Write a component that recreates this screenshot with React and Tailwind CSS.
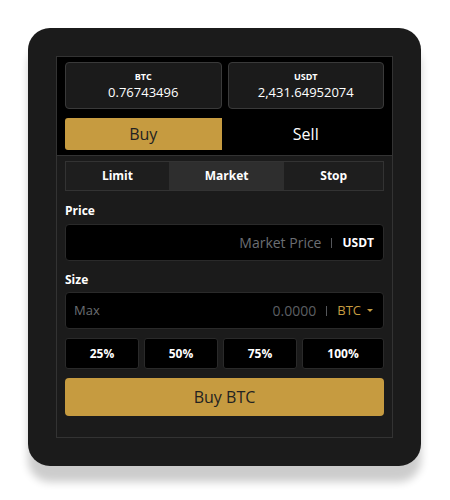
import React, { useState } from 'react';

const balances = [
  { coin: 'BTC', amount: '0.76743496' },
  { coin: 'USDT', amount: '2,431.64952074' },
];

const App = () => {
  const [side, setSide] = useState('buy');
  const [orderType, setOrderType] = useState('Market');

  return (
    <div className="min-h-screen bg-white pt-[28px] pl-[28px]" style={{ fontFamily: '"Open Sans", "Noto Sans", sans-serif' }}>
      <div className="w-[393px] rounded-[22px] bg-[#1b1b1b] p-[28px] shadow-[0_16px_8px_rgba(0,0,0,0.2)]">
        <div className="border border-[#333333]">
          {/* Balances + side toggle */}
          <div className="bg-black px-2 pt-[5px] pb-[5px] border-b border-[#333333]">
            <div className="grid grid-cols-2 gap-[6px]">
              {balances.map((b) => (
                <div key={b.coin} className="h-[47px] rounded-[4px] border border-[#3a3a3a] bg-[#1b1b1b] flex flex-col items-center justify-center">
                  <span className="text-[9px] font-bold leading-[12px] text-white">{b.coin}</span>
                  <span className="text-[13px] leading-[18px] text-white">{b.amount}</span>
                </div>
              ))}
            </div>
            <div className="mt-[9px] grid grid-cols-2 gap-[6px] h-[32px]">
              <button
                onClick={() => setSide('buy')}
                className={`rounded-l-[3px] text-[16px] ${side === 'buy' ? 'bg-[#c69b40] text-[#222222]' : 'text-white'}`}
              >
                Buy
              </button>
              <button
                onClick={() => setSide('sell')}
                className={`rounded-r-[3px] text-[16px] ${side === 'sell' ? 'bg-[#c69b40] text-[#222222]' : 'text-white'}`}
              >
                Sell
              </button>
            </div>
          </div>

          {/* Order form */}
          <div className="bg-[#1b1b1b] px-2 pt-[5px] pb-[21px]">
            <div className="flex h-[30px] border border-[#333333] bg-[#1e1e1e]">
              {['Limit', 'Market', 'Stop'].map((t) => (
                <button
                  key={t}
                  onClick={() => setOrderType(t)}
                  className={`flex-auto text-[12px] font-bold text-white ${orderType === t ? 'bg-[#2e2e2e]' : ''}`}
                >
                  {t}
                </button>
              ))}
            </div>

            <div className="mt-[12px] text-[12px] font-bold leading-[16px] text-white">Price</div>
            <div className="mt-[5px] h-[37px] rounded-[4px] border border-[#2a2a2a] bg-black flex items-center justify-end px-[9px]">
              <span className="text-[14px] text-[#6b6e73]">Market Price</span>
              <span className="mx-[10px] h-[10px] w-px bg-[#55575b]"></span>
              <span className="text-[12px] font-bold text-white">USDT</span>
            </div>

            <div className="mt-[11px] text-[12px] font-bold leading-[16px] text-white">Size</div>
            <div className="mt-[4px] h-[37px] rounded-[4px] border border-[#2a2a2a] bg-black flex items-center px-[8px]">
              <span className="text-[13px] text-[#6b6e73]">Max</span>
              <span className="ml-auto text-[14px] text-[#5c5f63]">0.0000</span>
              <span className="mx-[10px] h-[10px] w-px bg-[#55575b]"></span>
              <span className="text-[13px] text-[#c69b40]">BTC</span>
              <span className="ml-[6px] mr-[2px] border-x-[3px] border-t-[3px] border-x-transparent border-t-[#c69b40]"></span>
            </div>

            <div className="mt-[9px] grid grid-cols-[74px_74px_74px_1fr] gap-[5px]">
              {['25%', '50%', '75%', '100%'].map((p) => (
                <button key={p} className="h-[31px] rounded-[3px] border border-[#2a2a2a] bg-black text-[12px] font-bold text-white">
                  {p}
                </button>
              ))}
            </div>

            <button className="mt-[9px] h-[38px] w-full rounded-[4px] bg-[#c69b40] text-[16px] text-[#222222]">
              Buy BTC
            </button>
          </div>
        </div>
      </div>
    </div>
  );
};

export default App;
